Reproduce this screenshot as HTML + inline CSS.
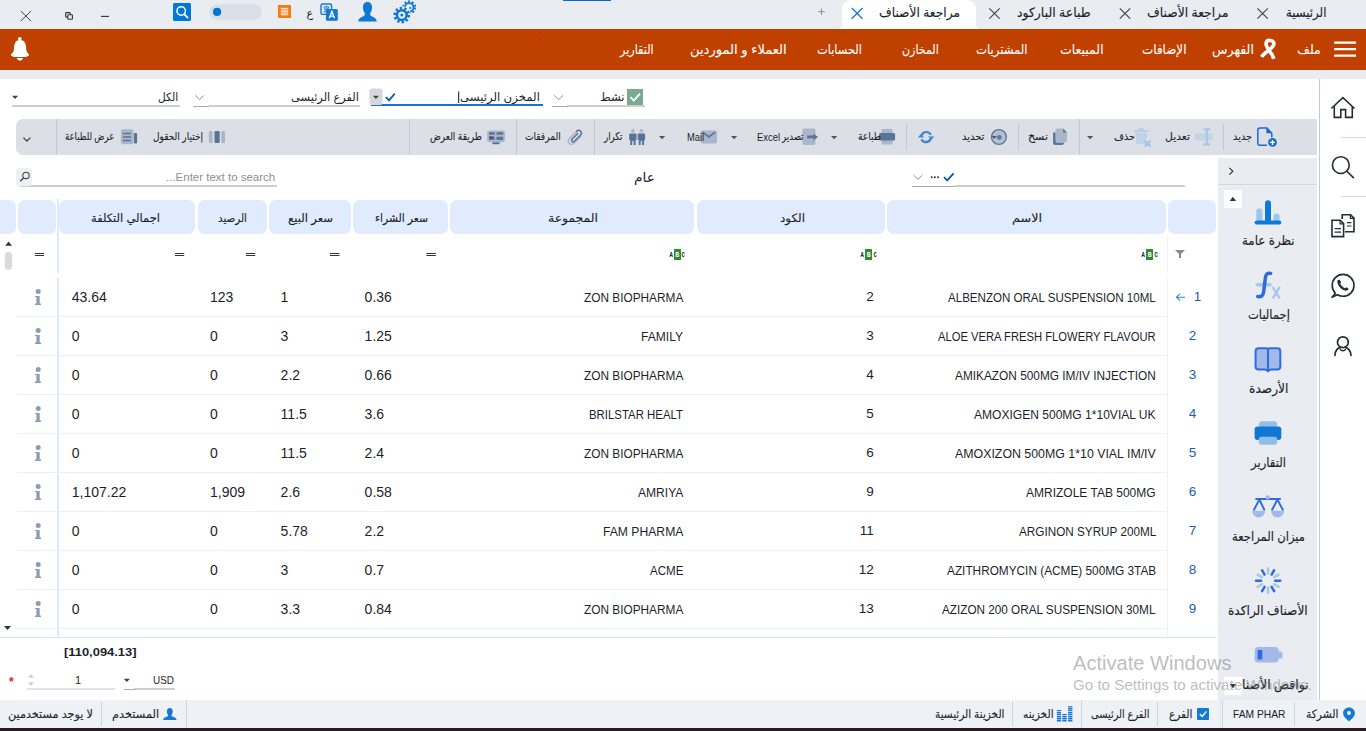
<!DOCTYPE html>
<html lang="ar">
<head>
<meta charset="utf-8">
<title>مراجعة الأصناف</title>
<style>
html,body{margin:0;padding:0}
body{width:1366px;height:731px;position:relative;overflow:hidden;background:#fff;font-family:"Liberation Sans","DejaVu Sans",sans-serif;color:#1b1f2a}
.a{position:absolute}
.t{position:absolute;white-space:nowrap;line-height:20px;transform-origin:left center;display:block}
svg{position:absolute;overflow:visible}
#titlebar{left:0;top:0;width:1366px;height:29px;background:#e9ecf1}
#acttab{left:842px;top:0;width:134px;height:29px;background:#fff;border-radius:9px 9px 0 0}
#menubar{left:0;top:28.500px;width:1366px;height:41.500px;background:#c04000}
#strip{left:0;top:70px;width:1366px;height:8.5px;background:#e9ecf1}
#rborder{left:1318.800px;top:79px;width:1.200px;height:621px;background:#c0c9d6}
#toolbar{left:16px;top:119px;width:1301px;height:36px;background:#dcdfe5;border-radius:7px 0 0 7px}
.tsep{position:absolute;width:1px;background:#c3c8d2;top:119px;height:36px}
.tsep.s{top:124px;height:26px}
#side{left:1218px;top:158px;width:99px;height:542px;background:#e9ecf1}
#sidesep{left:1218px;top:184px;width:99px;height:1px;background:#d3d8e0}
.hc{position:absolute;top:200px;height:33.5px;background:#e0ebfd;border-radius:6.500px}
#fixline{left:57px;top:199px;width:2px;height:438px;background:#dde9fc}
.rsep{position:absolute;left:17px;width:1150px;height:1px;background:#ecf0f8}
#statusbar{left:0;top:700px;width:1366px;height:27.5px;background:#eef1f6}
.ssep{position:absolute;top:701.500px;width:1px;height:24.300px;background:#cfd4dc}
#bottom{left:0;top:727.5px;width:1366px;height:3.5px;background:#2a1a22}
.ul{position:absolute;height:1px;background:#a9abb0}
.ul2{position:absolute;height:2px;background:#cdcdcf}
.isep{position:absolute;left:1341px;width:25px;height:1px;background:#d5dbe6}
.abc{height:11px;line-height:11px;font-size:6.5px;font-weight:bold;font-family:"Liberation Mono","DejaVu Sans Mono",monospace;color:#222;white-space:nowrap;direction:ltr;display:flex;align-items:center}
.abc .ab{display:inline-block;width:4.4px;text-align:center;position:relative;top:1.200px;transform:scaleX(0.850)}
.abc .bb{display:inline-block;width:7.200px;height:11px;line-height:13.400px;overflow:hidden;background:#2e8b2e;color:#fff;text-align:center;margin:0 0.400px;border-radius:0.500px}
</style>
</head>
<body>
<div class="a" id="titlebar"></div>
<div class="a" style="left:563px;top:0;width:48px;height:1.300px;background:#0a69d0"></div>
<div class="a" id="acttab"></div>
<svg class="a" style="left:830px;top:18px" width="160" height="11" viewBox="830 18 160 11"><path d="M836 29 C840.500 29,842 27,842 23 V29 Z M982 29 C977.500 29,976 27,976 23 V29 Z" fill="#fff"/></svg>
<div class="a" id="menubar"></div>
<div class="a" id="strip"></div>
<div class="a" id="rborder"></div>
<div class="a" id="toolbar"></div>
<div class="a" id="side"></div>
<div class="a" id="sidesep"></div>
<div class="a" id="statusbar"></div>
<div class="a" id="bottom"></div>
<!-- header cells -->
<div class="hc" style="left:-8px;width:24px"></div>
<div class="hc" style="left:18px;width:37.5px"></div>
<div class="hc" style="left:58.800px;width:136.700px"></div>
<div class="hc" style="left:198px;width:69px"></div>
<div class="hc" style="left:269.4px;width:81.2px"></div>
<div class="hc" style="left:353.4px;width:94.4px"></div>
<div class="hc" style="left:450px;width:243.5px"></div>
<div class="hc" style="left:696.5px;width:188.3px"></div>
<div class="hc" style="left:887px;width:279.2px"></div>
<div class="hc" style="left:1168.4px;width:47.6px"></div>
<div class="a" id="fixline"></div>
<div class="a" style="left:57px;top:272.5px;width:2px;height:5.5px;background:#fff"></div>
<!-- row separators -->
<div class="rsep" style="top:316px"></div>
<div class="rsep" style="top:355px"></div>
<div class="rsep" style="top:394px"></div>
<div class="rsep" style="top:433px"></div>
<div class="rsep" style="top:472px"></div>
<div class="rsep" style="top:511px"></div>
<div class="rsep" style="top:550px"></div>
<div class="rsep" style="top:589px"></div>
<div class="rsep" style="top:628px"></div>
<div class="a" style="left:1167px;top:237px;width:1px;height:34.500px;background:#ecf0f8"></div>
<div class="a" style="left:1167px;top:278px;width:1px;height:359px;background:#ecf0f8"></div>
<div class="a" style="left:0;top:636.5px;width:1217px;height:1px;background:#d6e4f7"></div>
<!-- status separators -->
<div class="ssep" style="left:1294px"></div>
<div class="ssep" style="left:1222.400px;top:700px;height:27.500px"></div>
<div class="ssep" style="left:1157.300px"></div>
<div class="ssep" style="left:1081.300px;top:700px;height:27.500px"></div>
<div class="ssep" style="left:1012.300px"></div>
<div class="ssep" style="left:186px;top:700px;height:27.500px"></div>
<div class="ssep" style="left:100.800px"></div>
<!-- toolbar separators -->
<div class="tsep s" style="left:1223px"></div>
<div class="tsep" style="left:1079px"></div>
<div class="tsep s" style="left:1018px"></div>
<div class="tsep s" style="left:906px"></div>
<div class="tsep" style="left:594px"></div>
<div class="tsep" style="left:515.5px"></div>
<div class="tsep" style="left:408.5px"></div>
<div class="tsep" style="left:55.5px"></div>
<!-- right icon separators -->
<div class="isep" style="top:137px"></div>
<div class="isep" style="top:196px"></div>
<!-- underlines -->
<div class="ul2" style="left:567px;top:105px;width:78px"></div><div class="ul" style="left:551.5px;top:106px;width:16px"></div>
<div class="a" style="left:371px;top:104px;width:172px;height:2px;background:#1a73d0"></div>
<div class="ul2" style="left:209px;top:105px;width:151px"></div><div class="ul" style="left:193px;top:106px;width:16px"></div>
<div class="ul2" style="left:12px;top:105px;width:168px"></div>
<div class="ul2" style="left:20px;top:185.300px;width:257px"></div>
<div class="ul2" style="left:955px;top:185.300px;width:230px"></div><div class="ul" style="left:912px;top:186.200px;width:43px"></div>
<div class="ul2" style="left:134px;top:688.300px;width:41px;height:1.600px"></div><div class="ul" style="left:123.700px;top:688.900px;width:11px"></div>
<div class="a" style="left:27px;top:688px;width:88px;height:1.500px;background:#dfe3ea"></div>
<!-- window controls + title icons + menu icons -->
<svg class="a" style="left:0;top:0" width="1366" height="80" viewBox="0 0 1366 80">
 <g stroke="#333" fill="none">
  <path d="M20.8 11 L31.1 21.1 M31.1 11 L20.8 21.1" stroke-width="0.9"/>
  <rect x="65.700" y="12.600" width="4.500" height="4.500" rx="0.700" stroke-width="1.1"/>
  <rect x="67.800" y="14.700" width="4.600" height="4.600" rx="0.700" stroke-width="1.1" fill="#e9ecf1"/>
  <path d="M101 16.4 H109" stroke-width="1.1"/>
 </g>
 <!-- tab close buttons -->
 <g stroke="#444" stroke-width="1.150" fill="none">
  <path d="M1257.4 8.3 L1267.8 18.7 M1267.8 8.3 L1257.4 18.7"/>
  <path d="M1119.8 8.3 L1130.2 18.7 M1130.2 8.3 L1119.8 18.7"/>
  <path d="M989.3 8.3 L999.7 18.7 M999.7 8.3 L989.3 18.7"/>
 </g>
 <path d="M851.7 8 L862.5 18.8 M862.5 8 L851.7 18.8" stroke="#1478d4" stroke-width="1.3" fill="none"/>
 <path d="M818.2 11.7 H824.8 M821.5 8.4 V15" stroke="#8a8f98" stroke-width="1" fill="none"/>
 <!-- search square -->
 <rect x="173" y="3" width="18" height="18" rx="1.5" fill="#0078d7"/>
 <circle cx="181.2" cy="11" r="4.2" fill="none" stroke="#fff" stroke-width="1.5"/>
 <path d="M184.4 14.3 L187.6 17.6" stroke="#fff" stroke-width="1.8" stroke-linecap="round"/>
 <!-- pill -->
 <rect x="209.2" y="4.2" width="52.6" height="15.6" rx="7.8" fill="#dadee6"/>
 <circle cx="217.1" cy="11.9" r="4.1" fill="#0078d0"/>
 <!-- orange -->
 <rect x="278" y="5" width="13" height="13" fill="#f57c0f"/>
 <path d="M280.8 8.4 H288.2 M280.8 10.1 H288.2 M280.8 11.7 H288.2 M280.8 13.2 H288.2 M280.8 14.8 H288.2" stroke="#fff" stroke-width="0.9"/>
 <!-- translate -->
 <rect x="321" y="4" width="10.6" height="10.4" rx="1.5" fill="#e9ecf1" stroke="#0f78d4" stroke-width="1.4"/>
 <path d="M323.3 7 H329.3 M326.3 5.6 V7 M324 9 H328.6 M328.4 7.2 C328 10,326 11.5,323.6 12.2 M324.6 8.8 C325.5 10.5,327 11.6,329 12.2" stroke="#0f78d4" stroke-width="1" fill="none"/>
 <rect x="325.9" y="8.9" width="11.9" height="11.9" rx="1.5" fill="#0f78d4"/>
 <path d="M329.3 18.3 L331.9 11.4 L334.5 18.3 M330.2 16.1 H333.6" stroke="#fff" stroke-width="1.3" fill="none"/>
 <!-- user -->
 <path d="M367.4 2 C370.4 2,372 4.2,372 7.4 C372 10,371 12,370.2 13.2 C370 14.6,370.4 15.6,371.6 16.2 C374.6 17.4,376.6 18.6,376.8 21.5 L358.2 21.5 C358.4 18.6,360.4 17.4,363.4 16.2 C364.6 15.6,365 14.6,364.8 13.2 C364 12,363 10,363 7.4 C363 4.2,364.4 2,367.4 2 Z" fill="#0f78d4"/>
 <!-- gears -->
 <g fill="none" stroke="#0f78d4">
  <circle cx="409.2" cy="7.4" r="5.6" stroke-width="2.6" stroke-dasharray="1.9 1.62"/>
  <circle cx="409.2" cy="7.4" r="4.2" stroke-width="1.8"/>
 </g>
 <circle cx="401.8" cy="15.1" r="9.2" fill="#e9ecf1"/>
 <g fill="none" stroke="#0f78d4">
  <circle cx="401.8" cy="15.1" r="7" stroke-width="2.8" stroke-dasharray="2.3 2.1"/>
  <circle cx="401.8" cy="15.1" r="4.9" stroke-width="2.6"/>
 </g>
 <circle cx="401.8" cy="15.1" r="1.5" fill="#0f78d4"/>
 <circle cx="410.2" cy="8" r="1.1" fill="#0f78d4"/>
 <!-- bell -->
 <circle cx="19.8" cy="38.8" r="1.8" fill="#fff"/>
 <path d="M19.9 40 C14.8 40,14 45,14 49 C14 52,12.2 53,10.8 54.4 C10.6 56.6,15 57.1,19.9 57.1 C25 57.1,29.3 56.6,29.1 54.4 C27.8 53,26.2 52,26.2 49 C26.2 45,25.4 40,19.9 40 Z" fill="#fff"/>
 <path d="M16.7 58.1 H23 C22.4 60,21 60.6,19.9 60.6 C18.7 60.6,17.3 60,16.7 58.1 Z" fill="#fff"/>
 <!-- hamburger -->
 <path d="M1334.1 42.6 H1356.1 M1334.1 49.1 H1356.1 M1334.1 55.6 H1356.1" stroke="#fff" stroke-width="2.1"/>
 <!-- ribbon -->
 <path d="M1263 58 C1264.500 53.500,1270.500 50,1272.600 45.500 C1274 41.500,1271.500 40.300,1269.100 40.300 C1266.700 40.300,1264.200 41.500,1265.600 45.500 C1267.700 50,1273.700 53.500,1275.200 58" fill="none" stroke="#fff" stroke-width="3.600" stroke-linejoin="round" transform="rotate(9 1269 49)"/>
 <circle cx="539.500" cy="39.600" r="1.400" fill="#f0141e"/>
</svg>
<span class="t" dir="rtl" style="left:306.500px;top:3px;font-size:11px;color:#222">ع</span>

<!-- filter row + toolbar + search row icons -->
<svg class="a" style="left:0;top:0" width="1366" height="290" viewBox="0 0 1366 290">
 <!-- green checkbox -->
 <rect x="627" y="89" width="16" height="16" fill="#7aa890"/>
 <path d="M630.4 97.2 L633.8 100.6 L640 93.6" stroke="#fff" stroke-width="1.8" fill="none"/>
 <!-- chevrons -->
 <g stroke="#8a8f98" stroke-width="1" fill="none">
  <path d="M554.2 95.4 L558.6 99.6 L563 95.4"/>
  <path d="M195.4 95.4 L199.6 99.6 L203.8 95.4"/>
  <path d="M913.6 175 L918 179.3 L922.4 175"/>
 </g>
 <!-- dropdown button -->
 <rect x="369.4" y="88.6" width="13" height="16.4" rx="2" fill="#d3d7de"/>
 <path d="M372.9 95.8 H378.9 L375.9 99 Z" fill="#444"/>
 <path d="M385.8 97.2 L389 100.4 L394.8 93.6" stroke="#0d56a8" stroke-width="1.7" fill="none"/>
 <path d="M458.7 91.5 V103" stroke="#111" stroke-width="1"/>
 <path d="M12 95.8 H18.2 L15.1 99 Z" fill="#444"/>
 <!-- search row -->
 <path d="M944 177.2 L947.2 180.4 L953.6 173.4" stroke="#0d56a8" stroke-width="1.8" fill="none"/>
 <g fill="#333"><rect x="930.8" y="176.4" width="1.7" height="1.7"/><rect x="934" y="176.4" width="1.7" height="1.7"/><rect x="937.2" y="176.4" width="1.7" height="1.7"/></g>
 <rect x="16.100" y="168" width="15.900" height="18" rx="3" fill="#eef0f3"/>
 <circle cx="26" cy="175.400" r="3.200" fill="none" stroke="#444" stroke-width="1.100"/>
 <path d="M23.700 177.800 L20.200 181.300" stroke="#444" stroke-width="1.300"/>
 <!-- toolbar: chevron -->
 <path d="M23.4 137.6 L26.9 141 L30.4 137.6" stroke="#444" stroke-width="1.3" fill="none"/>
 <!-- triangles -->
 <g fill="#555">
  <path d="M1087 136 H1093.2 L1090.1 139.3 Z"/>
  <path d="M831 136 H837.2 L834.1 139.3 Z"/>
  <path d="M731 136 H737.2 L734.1 139.3 Z"/>
  <path d="M659 136 H665.2 L662.1 139.3 Z"/>
 </g>
 <!-- new -->
 <path d="M1266.6 127.9 H1260 C1258.6 127.9,1257.8 128.8,1257.8 130.2 V143 C1257.8 144.4,1258.6 145.3,1260 145.3 H1267" stroke="#1a6bd8" stroke-width="1.5" fill="none"/>
 <path d="M1266.4 127.6 L1271.8 133.2 V137.6" stroke="#1a6bd8" stroke-width="1.5" fill="none"/>
 <path d="M1266.4 127.6 L1271.8 133.2 H1266.4 Z" fill="#1a6bd8"/>
 <circle cx="1272.5" cy="142.4" r="4.4" fill="#1a6bd8"/>
 <path d="M1270 142.4 H1275 M1272.5 139.9 V144.9" stroke="#fff" stroke-width="1.4"/>
 <!-- edit -->
 <rect x="1194.7" y="133" width="18" height="7.5" rx="2.5" fill="#c5d5e8"/>
 <path d="M1203.4 129.200 H1210.2 M1203.4 144.400 H1210.2 M1206.8 129.200 V144.400" stroke="#a3c6ec" stroke-width="2" fill="none"/>
 <!-- delete -->
 <path d="M1134 131 H1148.4 M1138.4 129.2 H1144" stroke="#b9cfe8" stroke-width="1.8"/>
 <path d="M1135.2 132.4 H1147.2 L1146 144.2 H1136.4 Z" fill="#c0d2e8"/>
 <path d="M1144.6 140.8 L1150.6 146.6 M1150.6 140.8 L1144.6 146.6" stroke="#a0c4ee" stroke-width="2.200"/>
 <!-- copy -->
 <path d="M1053 132.5 H1056 V142.5 H1064 V143 C1064 144.2,1063.2 145,1062 145 H1055 C1053.8 145,1053 144.2,1053 143 Z" fill="#5b78a0"/>
 <path d="M1057.4 128.5 H1063 L1067 132.6 V140.6 C1067 141.8,1066.2 142.6,1065 142.6 H1057.4 C1056.2 142.6,1055.4 141.8,1055.4 140.6 V130.5 C1055.4 129.3,1056.2 128.5,1057.4 128.5 Z" fill="#aab6c9"/>
 <path d="M1063 128.5 L1067 132.6 H1063 Z" fill="#5b78a0"/>
 <!-- select -->
 <circle cx="998.9" cy="137" r="7.4" fill="#b4bfd0" stroke="#5b78a0" stroke-width="1.4"/>
 <circle cx="999.3" cy="137.4" r="2.3" fill="#5b78a0"/>
 <path d="M991.6 136 H997 L994.3 138.8 Z" fill="#555"/>
 <!-- refresh -->
 <g fill="none" stroke="#3d85d0" stroke-width="2.2">
  <path d="M921.4 135.6 C922.4 132.8,924.4 132,926.2 132 C928.2 132,929.8 133,930.8 134.8"/>
  <path d="M930.8 138.6 C929.8 141.2,927.8 142.2,926 142.2 C924 142.2,922.4 141.2,921.4 139.4"/>
 </g>
 <path d="M928 136.4 H934.2 L931.6 139.8 Z M917.9 137.6 H924.2 L920.6 134.2 Z" fill="#3d85d0"/>
 <!-- print -->
 <rect x="881.6" y="129" width="11" height="5" rx="1.5" fill="#aab6c9"/>
 <rect x="881.6" y="138.4" width="11" height="6.2" rx="1.5" fill="#aab6c9"/>
 <rect x="879" y="133" width="16.1" height="7.5" rx="1.5" fill="#5a7399"/>
 <!-- export -->
 <rect x="802.4" y="128.5" width="13.1" height="16.4" rx="2" fill="#aab6c9"/>
 <path d="M807.2 135.6 H813.4 V133.4 L818 136.9 L813.4 140.4 V138.2 H807.2 Z" fill="#5a7399"/>
 <!-- mail -->
 <rect x="700.6" y="130.6" width="16.5" height="12.8" rx="2" fill="#aab6c9"/>
 <path d="M702.6 132.2 L708.85 137 L715.1 132.2" stroke="#5a7399" stroke-width="1.7" fill="none"/>
 <!-- people -->
 <circle cx="632.9" cy="130.8" r="1.9" fill="#aab6c9"/><circle cx="641.4" cy="130.8" r="1.9" fill="#aab6c9"/>
 <path d="M630 133.4 H635.8 C636.3 133.4,636.6 133.8,636.6 134.3 V140 H635.6 V145 H633.6 V141 H632.2 V145 H630.2 V140 H629.2 V134.3 C629.2 133.8,629.5 133.4,630 133.4 Z" fill="#5a7399"/>
 <path d="M638.5 133.4 H644.3 C644.8 133.4,645.1 133.8,645.1 134.3 V140 H644.1 V145 H642.1 V141 H640.7 V145 H638.7 V140 H637.7 V134.3 C637.700 133.8,638 133.4,638.5 133.4 Z" fill="#5a7399"/>
 <!-- clip -->
 <g fill="none" stroke-linecap="round">
  <path d="M580.6 136.6 L574.2 143 C572.6 144.6,570.4 144.4,569.2 143.200 C568 142,568 140,569.4 138.6 L576.6 131.4" stroke="#aab6c9" stroke-width="1.5"/>
  <path d="M576.6 131.400 C577.8 130.200,579.6 130.200,580.600 131.200 C581.600 132.200,581.600 134,580.400 135.200 L574.4 141.200 C573.600 142,572.600 142,572 141.400 C571.400 140.800,571.400 139.800,572.200 139 L577.600 133.600" stroke="#5a7399" stroke-width="1.5"/>
 </g>
 <!-- view mode -->
 <rect x="487.2" y="130.6" width="17.7" height="11.6" rx="2" fill="#aab6c9"/>
 <g fill="#5a7399"><rect x="489" y="132.200" width="5.700" height="2.500"/><rect x="496.500" y="132.200" width="6.600" height="2.500"/><rect x="489" y="136.800" width="5.700" height="3.100"/><rect x="496.500" y="136.800" width="6.600" height="3.100"/><rect x="492.200" y="142.200" width="7.500" height="2.100" rx="0.800"/></g>
 <path d="M488.800 136.400 H493.800 L491.300 139 Z" fill="#444"/>
 <!-- column chooser -->
 <rect x="208.9" y="131" width="3.700" height="12" rx="1.200" fill="#aab6c9"/>
 <rect x="214.5" y="131" width="5.200" height="12" rx="1.200" fill="#5a7399"/>
 <rect x="221.3" y="131" width="3.800" height="12" rx="1.200" fill="#aab6c9"/>
 <!-- print preview -->
 <rect x="120.9" y="129.3" width="12.500" height="15" rx="2" fill="#aab6c9"/>
 <path d="M123 133.400 H131.100 M123 137.100 H131.100 M123 140.600 H131.100" stroke="#5a7399" stroke-width="1.500"/>
 <rect x="133.9" y="133" width="3.200" height="10.600" rx="1" fill="#5a7399"/>
 <!-- funnel -->
 <path d="M1175 250 H1185 L1181 254 V258 H1179 V254 Z" fill="#8a8a8a"/>
 <!-- equals -->
 <g stroke="#333" stroke-width="1">
  <path d="M426.400 253.500 H435.800 M426.400 255.500 H435.800"/>
  <path d="M330 253.500 H339.500 M330 255.500 H339.500"/>
  <path d="M246 253.500 H255.200 M246 255.500 H255.200"/>
  <path d="M175 253.500 H184.200 M175 255.500 H184.200"/>
  <path d="M34.900 253.500 H44 M34.900 255.500 H44"/>
 </g>
 <!-- left scrollbar -->
 <path d="M5.200 245.800 H12 L8.600 241.400 Z" fill="#333"/>
 <rect x="4.800" y="252" width="7.200" height="17.800" rx="3.600" fill="#d9dadd"/>
</svg>
<svg class="a" style="left:0;top:600px" width="200" height="100" viewBox="0 600 200 100">
 <path d="M4 626 H11 L7.500 630 Z" fill="#333"/>
 <path d="M123.700 678.800 H130 L126.850 682 Z" fill="#444"/>
 <path d="M28 677.400 H34 L31 674.500 Z M28 682.600 H34 L31 685.500 Z" fill="#c8c9cc"/>
</svg>
<span class="t" style="left:9px;top:672px;font-size:12px;color:#e0201a;font-weight:bold">*</span>

<!-- right icon column -->
<svg class="a" style="left:1320px;top:80px" width="46" height="300" viewBox="1320 80 46 300">
 <g fill="none" stroke="#272b33" stroke-width="1.6">
  <path d="M1331.3 108.5 L1342.9 97.6 L1354.5 108.5"/>
  <path d="M1334.3 106 V117.4 H1340.8 V109.6 H1345.6 V117.4 H1352.3 V106"/>
  <circle cx="1340.8" cy="165.1" r="8.4"/>
  <path d="M1346.8 171.2 L1353.4 177.6" stroke-linecap="round"/>
  <!-- docs -->
  <path d="M1342.2 219 V214.8 H1350.6 L1354 218.2 V231.8 H1345"/>
  <path d="M1350.4 214.8 V218.4 H1354" stroke-width="1.2"/>
  <path d="M1347 222.6 H1351.4 M1347 226 H1351.4" stroke-width="1.2"/>
  <path d="M1332 220.3 H1340.2 L1343.6 223.700 V236.600 H1332 Z"/>
  <path d="M1340 220.300 V223.900 H1343.600" stroke-width="1.2"/>
  <path d="M1334.600 228.600 H1341 M1334.600 232.200 H1341" stroke-width="1.2"/>
  <!-- whatsapp -->
  <path d="M1335.400 293.200 C1333.400 291.200,1332.200 288.400,1332.200 285.400 C1332.200 279.300,1337 274.400,1343.100 274.400 C1349.200 274.400,1354 279.300,1354 285.400 C1354 291.500,1349.200 296.300,1343.100 296.300 C1341 296.300,1339 295.700,1337.400 294.700 L1332 297.300 Z" stroke-linejoin="round"/>
  <!-- user -->
  <circle cx="1342.9" cy="342.2" r="5.4" stroke-width="1.7"/>
  <path d="M1334.900 355.400 C1335.300 350.600,1338 347.600,1341 347.300 M1344.800 347.300 C1347.800 347.600,1350.700 350.600,1351 355.400" stroke-width="1.7" stroke-linecap="round"/>
  <path d="M1340 349.200 C1341.400 351.400,1344.400 351.400,1345.800 349.200" stroke-width="1.5"/>
 </g>
 <path d="M1338 280 C1337.200 280.600,1337 282,1338 284.400 C1339.400 287.400,1342.400 290,1345.200 290.600 C1346.800 290.900,1348.200 290.200,1348.600 288.800 L1346.400 287.200 L1345 288.200 C1343.400 287.800,1340.800 285.400,1340.200 283.600 L1341.200 282.400 L1339.800 279.800 Z" fill="#272b33"/>
</svg>
<!-- side panel -->
<div class="a" style="left:1224px;top:190px;width:18px;height:17.6px;background:#fff"></div>

<svg class="a" style="left:1218px;top:158px" width="100" height="542" viewBox="1218 158 100 542">
 <path d="M1229.400 167.800 L1232.800 171.200 L1229.400 174.600" stroke="#333" stroke-width="1.200" fill="none"/>
 <path d="M1229.700 201 H1236.100 L1232.900 196.800 Z" fill="#333"/>
 
 <!-- chart -->
 <rect x="1256.300" y="208.400" width="6.100" height="13" rx="2.500" fill="#9cc6ec"/>
 <rect x="1273.500" y="213.800" width="6.100" height="8" rx="2.500" fill="#9cc6ec"/>
 <rect x="1265" y="200.200" width="6" height="22" rx="3" fill="#0f78d4"/>
 <rect x="1254.600" y="220.400" width="26.700" height="4.100" rx="2" fill="#0f78d4"/>
 <!-- fx -->
 <path d="M1257.400 284.800 H1270" stroke="#a9c4ee" stroke-width="3.600" stroke-linecap="round"/>
 <path d="M1270.600 273.400 C1267.400 272.600,1265.800 274.400,1265.400 277.600 L1263.600 292 C1263.200 295.600,1261.400 297.200,1257.800 296.600" stroke="#2d6be0" stroke-width="3.500" stroke-linecap="round" fill="none"/>
 <path d="M1273.200 287.800 L1279.200 297.600 M1279.200 287.800 L1273.200 297.600" stroke="#a9c4ee" stroke-width="2.400" stroke-linecap="round"/>
 <!-- book -->
 <path d="M1258.600 348.200 H1266 C1267.200 348.200,1268 349,1268 350.200 C1268 349,1268.800 348.200,1270 348.200 H1277.400 C1279.200 348.200,1280.300 349.400,1280.300 351.200 V366.400 C1280.300 368.200,1279.200 369.400,1277.400 369.400 H1271 C1270 369.400,1269 370.200,1268 371.200 C1267 370.200,1266 369.400,1265 369.400 H1258.600 C1256.800 369.400,1255.600 368.200,1255.600 366.400 V351.200 C1255.600 349.400,1256.800 348.200,1258.600 348.200 Z" fill="#a3b9ea" stroke="#2d6be0" stroke-width="2" stroke-linejoin="round"/>
 <path d="M1268 349.600 V370" stroke="#2d6be0" stroke-width="2"/>
 <!-- printer -->
 <rect x="1259.200" y="421.200" width="17.900" height="8" rx="3" fill="#8fbfe8"/>
 <rect x="1254.600" y="426.600" width="26.700" height="13.400" rx="3" fill="#0f78d4"/>
 <rect x="1258.700" y="436.800" width="18.600" height="7.900" rx="3" fill="#8fbfe8"/>
 <!-- scales -->
 <path d="M1253.200 510.800 H1264.200 A5.500 6.400 0 0 1 1253.200 510.800 Z M1252.200 510.800 H1265.200 A6.500 6.800 0 0 1 1252.200 510.800 Z" fill="#a3b9ea"/>
 <path d="M1271.100 510.800 H1284.100 A6.500 6.800 0 0 1 1271.100 510.800 Z" fill="#a3b9ea"/>
 <path d="M1256.200 499 H1280" stroke="#2d6be0" stroke-width="2.200" stroke-linecap="round"/>
 <path d="M1253.600 510.400 L1259.400 499.600 L1264.600 510.400 M1271.800 510.400 L1277.400 499.600 L1283.200 510.400" stroke="#2d6be0" stroke-width="2" fill="none" stroke-linejoin="round"/>
 <circle cx="1267.700" cy="497.400" r="2.200" fill="#a3b9ea"/>
 <!-- spinner -->
 <g stroke-width="2.500" stroke-linecap="round">
  <g stroke="#2d6be0">
   <path d="M1268.100 573.600 V568.600" transform="rotate(30 1268.100 580.700)"/>
   <path d="M1268.100 573.600 V568.600" transform="rotate(90 1268.100 580.700)"/>
   <path d="M1268.100 573.600 V568.600" transform="rotate(150 1268.100 580.700)"/>
   <path d="M1268.100 573.600 V568.600" transform="rotate(210 1268.100 580.700)"/>
   <path d="M1268.100 573.600 V568.600" transform="rotate(270 1268.100 580.700)"/>
   <path d="M1268.100 573.600 V568.600" transform="rotate(330 1268.100 580.700)"/>
  </g>
  <g stroke="#a9c4ee">
   <path d="M1268.100 573.600 V568.600"/>
   <path d="M1268.100 573.600 V568.600" transform="rotate(60 1268.100 580.700)"/>
   <path d="M1268.100 573.600 V568.600" transform="rotate(120 1268.100 580.700)"/>
   <path d="M1268.100 573.600 V568.600" transform="rotate(180 1268.100 580.700)"/>
   <path d="M1268.100 573.600 V568.600" transform="rotate(240 1268.100 580.700)"/>
   <path d="M1268.100 573.600 V568.600" transform="rotate(300 1268.100 580.700)"/>
  </g>
 </g>
 <!-- battery -->
 <rect x="1254.700" y="647.100" width="23.900" height="15.400" rx="3.500" fill="#a3b9ea"/>
 <rect x="1277.600" y="651.500" width="4.800" height="7.100" rx="1.500" fill="#a3b9ea"/>
 <rect x="1257.600" y="650" width="4.700" height="9.600" rx="0.800" fill="#2d6be0"/>
</svg>
<!-- status bar icons -->
<svg class="a" style="left:0;top:700px" width="1366" height="28" viewBox="0 700 1366 28">
 <path d="M1349 707.400 C1352.400 707.400,1354.900 709.900,1354.900 713 C1354.900 716.600,1351.400 719.400,1349 721.400 C1346.600 719.400,1343.100 716.600,1343.100 713 C1343.100 709.900,1345.600 707.400,1349 707.400 Z" fill="#1478d4"/>
 <circle cx="1349" cy="713" r="1.900" fill="#fff"/>
 <rect x="1197" y="708" width="12" height="12" rx="1" fill="#1478d4"/>
 <path d="M1199.800 714 L1202.200 716.400 L1206.400 711.400" stroke="#fff" stroke-width="1.400" fill="none"/>
 <g stroke="#1478d4" stroke-width="4.300" stroke-dasharray="1.500 0.600">
  <path d="M1059 721.600 V710"/><path d="M1064.500 721.600 V714"/><path d="M1070.250 721.600 V706.300"/>
 </g>
 <path d="M169.800 708 C171.700 708,172.700 709.400,172.700 711.300 C172.700 713,172.100 714.200,171.600 714.900 C171.500 715.700,171.700 716.300,172.400 716.600 C174.300 717.300,176.400 718,176.600 720 L163 720 C163.200 718,165.300 717.300,167.200 716.600 C167.900 716.300,168.100 715.700,168 714.900 C167.500 714.200,166.900 713,166.900 711.300 C166.900 709.400,167.900 708,169.800 708 Z" fill="#1478d4"/>
</svg>
<div class="ssep" style="left:1219.500px;background:#dde1e8;top:700px;height:27.500px"></div>

<!-- info icons, arrow, abc -->
<svg class="a" style="left:0;top:278px" width="1366" height="360" viewBox="0 278 1366 360">
<defs><g id="inf"><circle cx="38.200" cy="291.400" r="2.500"/><path d="M35 295.900 H39.700 V303.500 H41.100 V304.900 H35 V303.500 H36.400 V297.100 H35 Z"/></g></defs>
<g fill="#8d9cb5">
<use href="#inf" y="0"/>
<use href="#inf" y="39"/>
<use href="#inf" y="78"/>
<use href="#inf" y="117"/>
<use href="#inf" y="156"/>
<use href="#inf" y="195"/>
<use href="#inf" y="234"/>
<use href="#inf" y="273"/>
<use href="#inf" y="312"/>
</g>
<path d="M1185 297.200 H1176.600 M1180 293.800 L1176.400 297.200 L1180 300.600" stroke="#2b8ae0" stroke-width="1.100" fill="none"/>
</svg>
<div class="a abc" style="left:1141.3px;top:249px"><span class="ab">A</span><span class="bb">B</span><span class="ab">C</span></div>
<div class="a abc" style="left:860.3px;top:249px"><span class="ab">A</span><span class="bb">B</span><span class="ab">C</span></div>
<div class="a abc" style="left:668.8px;top:249px"><span class="ab">A</span><span class="bb">B</span><span class="ab">C</span></div>

<!--SHAPES-->
<span class="t" id="t0" dir="rtl" style="left:1285.6px;top:3.0px;font-size:13px;color:#1b1f2a;font-weight:normal;transform:scaleX(0.9022);-webkit-text-stroke:0.12px #1b1f2a;">الرئيسية</span>
<span class="t" id="t1" dir="rtl" style="left:1147.0px;top:3.0px;font-size:13px;color:#1b1f2a;font-weight:normal;transform:scaleX(0.9470);-webkit-text-stroke:0.12px #1b1f2a;">مراجعة الأصناف</span>
<span class="t" id="t2" dir="rtl" style="left:1017.4px;top:3.0px;font-size:13px;color:#1b1f2a;font-weight:normal;transform:scaleX(0.9558);-webkit-text-stroke:0.12px #1b1f2a;">طباعة الباركود</span>
<span class="t" id="t3" dir="rtl" style="left:879.0px;top:3.0px;font-size:13px;color:#1b1f2a;font-weight:normal;transform:scaleX(0.9412);-webkit-text-stroke:0.12px #1b1f2a;">مراجعة الأصناف</span>
<span class="t" id="t4" dir="rtl" style="left:1297.4px;top:39.5px;font-size:13.5px;color:#ffffff;font-weight:normal;transform:scaleX(0.9265);-webkit-text-stroke:0.1px #fff;">ملف</span>
<span class="t" id="t5" dir="rtl" style="left:1212.0px;top:39.5px;font-size:13.5px;color:#ffffff;font-weight:normal;transform:scaleX(0.9363);-webkit-text-stroke:0.1px #fff;">الفهرس</span>
<span class="t" id="t6" dir="rtl" style="left:1141.5px;top:39.5px;font-size:13.5px;color:#ffffff;font-weight:normal;transform:scaleX(0.8845);-webkit-text-stroke:0.1px #fff;">الإضافات</span>
<span class="t" id="t7" dir="rtl" style="left:1060.0px;top:39.5px;font-size:13.5px;color:#ffffff;font-weight:normal;transform:scaleX(0.9246);-webkit-text-stroke:0.1px #fff;">المبيعات</span>
<span class="t" id="t8" dir="rtl" style="left:976.0px;top:39.5px;font-size:13.5px;color:#ffffff;font-weight:normal;transform:scaleX(0.8608);-webkit-text-stroke:0.1px #fff;">المشتريات</span>
<span class="t" id="t9" dir="rtl" style="left:901.6px;top:39.5px;font-size:13.5px;color:#ffffff;font-weight:normal;transform:scaleX(0.8167);-webkit-text-stroke:0.1px #fff;">المخازن</span>
<span class="t" id="t10" dir="rtl" style="left:816.7px;top:39.5px;font-size:13.5px;color:#ffffff;font-weight:normal;transform:scaleX(0.8420);-webkit-text-stroke:0.1px #fff;">الحسابات</span>
<span class="t" id="t11" dir="rtl" style="left:690.0px;top:39.5px;font-size:13.5px;color:#ffffff;font-weight:normal;transform:scaleX(0.9687);-webkit-text-stroke:0.1px #fff;">العملاء و الموردين</span>
<span class="t" id="t12" dir="rtl" style="left:620.0px;top:39.5px;font-size:13.5px;color:#ffffff;font-weight:normal;transform:scaleX(0.8299);-webkit-text-stroke:0.1px #fff;">التقارير</span>
<span class="t" id="t13" dir="rtl" style="left:599.6px;top:87.3px;font-size:11.5px;color:#1b1f2a;font-weight:normal;transform:scaleX(1.0086);">نشط</span>
<span class="t" id="t14" dir="rtl" style="left:459.5px;top:87.3px;font-size:11.5px;color:#1b1f2a;font-weight:normal;transform:scaleX(1.0201);">المخزن الرئيسى</span>
<span class="t" id="t15" dir="rtl" style="left:291.0px;top:87.3px;font-size:11.5px;color:#1b1f2a;font-weight:normal;transform:scaleX(0.9929);">الفرع الرئيسى</span>
<span class="t" id="t16" dir="rtl" style="left:158.0px;top:87.3px;font-size:11.5px;color:#1b1f2a;font-weight:normal;transform:scaleX(0.9281);">الكل</span>
<span class="t" id="t17" dir="rtl" style="left:1233.2px;top:126.4px;font-size:10.5px;color:#1b1f2a;font-weight:normal;transform:scaleX(0.9346);-webkit-text-stroke:0.1px #1b1f2a;">جديد</span>
<span class="t" id="t18" dir="rtl" style="left:1164.7px;top:126.4px;font-size:10.5px;color:#1b1f2a;font-weight:normal;transform:scaleX(1.0297);-webkit-text-stroke:0.1px #1b1f2a;">تعديل</span>
<span class="t" id="t19" dir="rtl" style="left:1114.2px;top:126.4px;font-size:10.5px;color:#1b1f2a;font-weight:normal;transform:scaleX(0.9174);-webkit-text-stroke:0.1px #1b1f2a;">حذف</span>
<span class="t" id="t20" dir="rtl" style="left:1028.0px;top:126.4px;font-size:10.5px;color:#1b1f2a;font-weight:normal;transform:scaleX(1.0483);-webkit-text-stroke:0.1px #1b1f2a;">نسخ</span>
<span class="t" id="t21" dir="rtl" style="left:962.3px;top:126.4px;font-size:10.5px;color:#1b1f2a;font-weight:normal;transform:scaleX(0.9469);-webkit-text-stroke:0.1px #1b1f2a;">تحديد</span>
<span class="t" id="t22" dir="rtl" style="left:858.0px;top:126.4px;font-size:10.5px;color:#1b1f2a;font-weight:normal;transform:scaleX(0.8638);-webkit-text-stroke:0.1px #1b1f2a;">طباعة</span>
<span class="t" id="t23" dir="rtl" style="left:782.0px;top:126.4px;font-size:10.5px;color:#1b1f2a;font-weight:normal;transform:scaleX(0.8186);-webkit-text-stroke:0.1px #1b1f2a;">تصدير</span>
<span class="t" id="t24" dir="ltr" style="left:757.2px;top:127.0px;font-size:10.5px;color:#1b1f2a;font-weight:normal;transform:scaleX(0.8954);">Excel</span>
<span class="t" id="t25" dir="ltr" style="left:686.5px;top:127.0px;font-size:10.5px;color:#1b1f2a;font-weight:normal;transform:scaleX(0.8928);">Mail</span>
<span class="t" id="t26" dir="rtl" style="left:604.3px;top:126.4px;font-size:10.5px;color:#1b1f2a;font-weight:normal;transform:scaleX(0.8217);-webkit-text-stroke:0.1px #1b1f2a;">تكرار</span>
<span class="t" id="t27" dir="rtl" style="left:525.3px;top:126.4px;font-size:10.5px;color:#1b1f2a;font-weight:normal;transform:scaleX(0.8622);-webkit-text-stroke:0.1px #1b1f2a;">المرفقات</span>
<span class="t" id="t28" dir="rtl" style="left:430.0px;top:126.4px;font-size:10.5px;color:#1b1f2a;font-weight:normal;transform:scaleX(0.8547);-webkit-text-stroke:0.1px #1b1f2a;">طريقة العرض</span>
<span class="t" id="t29" dir="rtl" style="left:152.8px;top:126.4px;font-size:10.5px;color:#1b1f2a;font-weight:normal;transform:scaleX(0.8591);-webkit-text-stroke:0.1px #1b1f2a;">إختيار الحقول</span>
<span class="t" id="t30" dir="rtl" style="left:65.3px;top:126.4px;font-size:10.5px;color:#1b1f2a;font-weight:normal;transform:scaleX(0.8051);-webkit-text-stroke:0.1px #1b1f2a;">عرض للطباعة</span>
<span class="t" id="t31" dir="rtl" style="left:166.3px;top:167.0px;font-size:11px;color:#8b9098;font-weight:normal;transform:scaleX(1.0444);">Enter text to search...</span>
<span class="t" id="t32" dir="rtl" style="left:634.0px;top:167.6px;font-size:13px;color:#1b1f2a;font-weight:normal;transform:scaleX(1.0616);">عام</span>
<span class="t" id="t33" dir="rtl" style="left:1012.0px;top:207.5px;font-size:11.5px;color:#1b1f2a;font-weight:normal;transform:scaleX(1.1092);-webkit-text-stroke:0.12px #1b1f2a;">الاسم</span>
<span class="t" id="t34" dir="rtl" style="left:780.0px;top:207.5px;font-size:11.5px;color:#1b1f2a;font-weight:normal;transform:scaleX(1.0363);-webkit-text-stroke:0.12px #1b1f2a;">الكود</span>
<span class="t" id="t35" dir="rtl" style="left:548.0px;top:207.5px;font-size:11.5px;color:#1b1f2a;font-weight:normal;transform:scaleX(1.0778);-webkit-text-stroke:0.12px #1b1f2a;">المجموعة</span>
<span class="t" id="t36" dir="rtl" style="left:375.0px;top:207.5px;font-size:11.5px;color:#1b1f2a;font-weight:normal;transform:scaleX(0.9357);-webkit-text-stroke:0.12px #1b1f2a;">سعر الشراء</span>
<span class="t" id="t37" dir="rtl" style="left:288.0px;top:207.5px;font-size:11.5px;color:#1b1f2a;font-weight:normal;transform:scaleX(1.0116);-webkit-text-stroke:0.12px #1b1f2a;">سعر البيع</span>
<span class="t" id="t38" dir="rtl" style="left:218.0px;top:207.5px;font-size:11.5px;color:#1b1f2a;font-weight:normal;transform:scaleX(0.8971);-webkit-text-stroke:0.12px #1b1f2a;">الرصيد</span>
<span class="t" id="t39" dir="rtl" style="left:91.0px;top:207.5px;font-size:11.5px;color:#1b1f2a;font-weight:normal;transform:scaleX(0.9991);-webkit-text-stroke:0.12px #1b1f2a;">اجمالي التكلفة</span>
<span class="t" id="t40" dir="ltr" style="left:948.1px;top:287.9px;font-size:12.5px;color:#1b1f2a;font-weight:normal;transform:scaleX(0.9247);">ALBENZON ORAL SUSPENSION 10ML</span>
<span class="t" id="t41" dir="ltr" style="left:584.1px;top:287.9px;font-size:12.5px;color:#1b1f2a;font-weight:normal;transform:scaleX(0.9468);">ZON BIOPHARMA</span>
<span class="t" id="t42" dir="ltr" style="left:938.2px;top:326.9px;font-size:12.5px;color:#1b1f2a;font-weight:normal;transform:scaleX(0.8976);">ALOE VERA FRESH FLOWERY FLAVOUR</span>
<span class="t" id="t43" dir="ltr" style="left:641.4px;top:326.9px;font-size:12.5px;color:#1b1f2a;font-weight:normal;transform:scaleX(0.9648);">FAMILY</span>
<span class="t" id="t44" dir="ltr" style="left:955.1px;top:365.9px;font-size:12.5px;color:#1b1f2a;font-weight:normal;transform:scaleX(0.9474);">AMIKAZON 500MG IM/IV INJECTION</span>
<span class="t" id="t45" dir="ltr" style="left:584.1px;top:365.9px;font-size:12.5px;color:#1b1f2a;font-weight:normal;transform:scaleX(0.9468);">ZON BIOPHARMA</span>
<span class="t" id="t46" dir="ltr" style="left:974.2px;top:404.9px;font-size:12.5px;color:#1b1f2a;font-weight:normal;transform:scaleX(0.9633);">AMOXIGEN 500MG 1*10VIAL UK</span>
<span class="t" id="t47" dir="ltr" style="left:589.4px;top:404.9px;font-size:12.5px;color:#1b1f2a;font-weight:normal;transform:scaleX(0.9122);">BRILSTAR HEALT</span>
<span class="t" id="t48" dir="ltr" style="left:955.0px;top:443.9px;font-size:12.5px;color:#1b1f2a;font-weight:normal;transform:scaleX(0.9888);">AMOXIZON 500MG 1*10 VIAL IM/IV</span>
<span class="t" id="t49" dir="ltr" style="left:584.1px;top:443.9px;font-size:12.5px;color:#1b1f2a;font-weight:normal;transform:scaleX(0.9468);">ZON BIOPHARMA</span>
<span class="t" id="t50" dir="ltr" style="left:1026.2px;top:482.9px;font-size:12.5px;color:#1b1f2a;font-weight:normal;transform:scaleX(0.9600);">AMRIZOLE TAB 500MG</span>
<span class="t" id="t51" dir="ltr" style="left:638.0px;top:482.9px;font-size:12.5px;color:#1b1f2a;font-weight:normal;transform:scaleX(0.9660);">AMRIYA</span>
<span class="t" id="t52" dir="ltr" style="left:1018.5px;top:521.9px;font-size:12.5px;color:#1b1f2a;font-weight:normal;transform:scaleX(0.9381);">ARGINON SYRUP 200ML</span>
<span class="t" id="t53" dir="ltr" style="left:603.0px;top:521.9px;font-size:12.5px;color:#1b1f2a;font-weight:normal;transform:scaleX(0.9727);">FAM PHARMA</span>
<span class="t" id="t54" dir="ltr" style="left:946.6px;top:560.9px;font-size:12.5px;color:#1b1f2a;font-weight:normal;transform:scaleX(0.9452);">AZITHROMYCIN (ACME) 500MG 3TAB</span>
<span class="t" id="t55" dir="ltr" style="left:650.0px;top:560.9px;font-size:12.5px;color:#1b1f2a;font-weight:normal;transform:scaleX(0.9246);">ACME</span>
<span class="t" id="t56" dir="ltr" style="left:942.4px;top:599.9px;font-size:12.5px;color:#1b1f2a;font-weight:normal;transform:scaleX(0.9385);">AZIZON 200 ORAL SUSPENSION 30ML</span>
<span class="t" id="t57" dir="ltr" style="left:584.1px;top:599.9px;font-size:12.5px;color:#1b1f2a;font-weight:normal;transform:scaleX(0.9468);">ZON BIOPHARMA</span>
<span class="t" id="t58" dir="rtl" style="left:1241.8px;top:231.0px;font-size:13px;color:#1b1f2a;font-weight:normal;transform:scaleX(0.9143);-webkit-text-stroke:0.12px #1b1f2a;">نظرة عامة</span>
<span class="t" id="t59" dir="rtl" style="left:1247.9px;top:304.6px;font-size:13px;color:#1b1f2a;font-weight:normal;transform:scaleX(0.8874);-webkit-text-stroke:0.12px #1b1f2a;">إجماليات</span>
<span class="t" id="t60" dir="rtl" style="left:1248.6px;top:378.6px;font-size:13px;color:#1b1f2a;font-weight:normal;transform:scaleX(0.9384);-webkit-text-stroke:0.12px #1b1f2a;">الأرصدة</span>
<span class="t" id="t61" dir="rtl" style="left:1251.0px;top:452.5px;font-size:13px;color:#1b1f2a;font-weight:normal;transform:scaleX(0.8949);-webkit-text-stroke:0.12px #1b1f2a;">التقارير</span>
<span class="t" id="t62" dir="rtl" style="left:1232.0px;top:527.0px;font-size:13px;color:#1b1f2a;font-weight:normal;transform:scaleX(0.8904);-webkit-text-stroke:0.12px #1b1f2a;">ميزان المراجعة</span>
<span class="t" id="t63" dir="rtl" style="left:1228.3px;top:601.0px;font-size:13px;color:#1b1f2a;font-weight:normal;transform:scaleX(0.9352);-webkit-text-stroke:0.12px #1b1f2a;">الأصناف الراكدة</span>
<span class="t" id="t64" dir="rtl" style="left:1229.0px;top:675.0px;font-size:13px;color:#1b1f2a;font-weight:normal;transform:scaleX(0.9588);-webkit-text-stroke:0.12px #1b1f2a;">نواقص الأصناف</span>
<span class="t" id="t65" dir="rtl" style="left:1305.5px;top:704.0px;font-size:11.5px;color:#1b1f2a;font-weight:normal;transform:scaleX(0.9298);-webkit-text-stroke:0.1px #1b1f2a;">الشركة</span>
<span class="t" id="t66" dir="ltr" style="left:1233.0px;top:704.0px;font-size:11.5px;color:#1b1f2a;font-weight:normal;transform:scaleX(0.8929);">FAM PHAR</span>
<span class="t" id="t67" dir="rtl" style="left:1169.0px;top:704.0px;font-size:11.5px;color:#1b1f2a;font-weight:normal;transform:scaleX(0.9132);-webkit-text-stroke:0.1px #1b1f2a;">الفرع</span>
<span class="t" id="t68" dir="rtl" style="left:1090.5px;top:704.0px;font-size:11.5px;color:#1b1f2a;font-weight:normal;transform:scaleX(0.8542);-webkit-text-stroke:0.1px #1b1f2a;">الفرع الرئيسى</span>
<span class="t" id="t69" dir="rtl" style="left:1023.0px;top:704.0px;font-size:11.5px;color:#1b1f2a;font-weight:normal;transform:scaleX(0.9186);-webkit-text-stroke:0.1px #1b1f2a;">الخزينه</span>
<span class="t" id="t70" dir="rtl" style="left:934.5px;top:704.0px;font-size:11.5px;color:#1b1f2a;font-weight:normal;transform:scaleX(0.9132);-webkit-text-stroke:0.1px #1b1f2a;">الخزينة الرئيسية</span>
<span class="t" id="t71" dir="rtl" style="left:111.9px;top:704.0px;font-size:11.5px;color:#1b1f2a;font-weight:normal;transform:scaleX(0.9880);-webkit-text-stroke:0.1px #1b1f2a;">المستخدم</span>
<span class="t" id="t72" dir="rtl" style="left:8.2px;top:704.0px;font-size:11.5px;color:#1b1f2a;font-weight:normal;transform:scaleX(0.9774);-webkit-text-stroke:0.1px #1b1f2a;">لا يوجد مستخدمين</span>
<span class="t" id="t73" dir="ltr" style="left:63.5px;top:642.0px;font-size:11.5px;color:#1b1f2a;font-weight:bold;transform:scaleX(1.1224);">[110,094.13]</span>
<span class="t" id="t74" dir="ltr" style="left:152.5px;top:670.0px;font-size:11px;color:#1b1f2a;font-weight:normal;transform:scaleX(0.9038);">USD</span>
<span class="t" id="t75" dir="ltr" style="left:1073.0px;top:652.5px;font-size:20px;color:rgba(125,125,125,.52);font-weight:normal;transform:scaleX(1.0042);z-index:6;">Activate Windows</span>
<span class="t" id="t76" dir="ltr" style="left:1073.0px;top:674.5px;font-size:15px;color:rgba(125,125,125,.52);font-weight:normal;transform:scaleX(1.0094);z-index:6;">Go to Settings to activate Windows.</span>
<span class="t" style="right:492.2px;top:287.3px;font-size:13.5px;color:#1b1f2a;font-weight:normal;">2</span>
<span class="t" style="left:364.6px;top:287.3px;font-size:14px;color:#1b1f2a;font-weight:normal;">0.36</span>
<span class="t" style="left:280.6px;top:287.3px;font-size:14px;color:#1b1f2a;font-weight:normal;">1</span>
<span class="t" style="left:210.0px;top:287.3px;font-size:14px;color:#1b1f2a;font-weight:normal;">123</span>
<span class="t" style="left:71.8px;top:287.3px;font-size:14px;color:#1b1f2a;font-weight:normal;">43.64</span>
<span class="t" style="left:1167.4px;width:60px;text-align:center;top:286.8px;font-size:13.5px;color:#1a5fb4;font-weight:normal;">1</span>
<span class="t" style="right:492.2px;top:326.3px;font-size:13.5px;color:#1b1f2a;font-weight:normal;">3</span>
<span class="t" style="left:364.6px;top:326.3px;font-size:14px;color:#1b1f2a;font-weight:normal;">1.25</span>
<span class="t" style="left:280.6px;top:326.3px;font-size:14px;color:#1b1f2a;font-weight:normal;">3</span>
<span class="t" style="left:210.0px;top:326.3px;font-size:14px;color:#1b1f2a;font-weight:normal;">0</span>
<span class="t" style="left:71.8px;top:326.3px;font-size:14px;color:#1b1f2a;font-weight:normal;">0</span>
<span class="t" style="left:1162.6px;width:60px;text-align:center;top:325.8px;font-size:13.5px;color:#1a5fb4;font-weight:normal;">2</span>
<span class="t" style="right:492.2px;top:365.3px;font-size:13.5px;color:#1b1f2a;font-weight:normal;">4</span>
<span class="t" style="left:364.6px;top:365.3px;font-size:14px;color:#1b1f2a;font-weight:normal;">0.66</span>
<span class="t" style="left:280.6px;top:365.3px;font-size:14px;color:#1b1f2a;font-weight:normal;">2.2</span>
<span class="t" style="left:210.0px;top:365.3px;font-size:14px;color:#1b1f2a;font-weight:normal;">0</span>
<span class="t" style="left:71.8px;top:365.3px;font-size:14px;color:#1b1f2a;font-weight:normal;">0</span>
<span class="t" style="left:1162.6px;width:60px;text-align:center;top:364.8px;font-size:13.5px;color:#1a5fb4;font-weight:normal;">3</span>
<span class="t" style="right:492.2px;top:404.3px;font-size:13.5px;color:#1b1f2a;font-weight:normal;">5</span>
<span class="t" style="left:364.6px;top:404.3px;font-size:14px;color:#1b1f2a;font-weight:normal;">3.6</span>
<span class="t" style="left:280.6px;top:404.3px;font-size:14px;color:#1b1f2a;font-weight:normal;">11.5</span>
<span class="t" style="left:210.0px;top:404.3px;font-size:14px;color:#1b1f2a;font-weight:normal;">0</span>
<span class="t" style="left:71.8px;top:404.3px;font-size:14px;color:#1b1f2a;font-weight:normal;">0</span>
<span class="t" style="left:1162.6px;width:60px;text-align:center;top:403.8px;font-size:13.5px;color:#1a5fb4;font-weight:normal;">4</span>
<span class="t" style="right:492.2px;top:443.3px;font-size:13.5px;color:#1b1f2a;font-weight:normal;">6</span>
<span class="t" style="left:364.6px;top:443.3px;font-size:14px;color:#1b1f2a;font-weight:normal;">2.4</span>
<span class="t" style="left:280.6px;top:443.3px;font-size:14px;color:#1b1f2a;font-weight:normal;">11.5</span>
<span class="t" style="left:210.0px;top:443.3px;font-size:14px;color:#1b1f2a;font-weight:normal;">0</span>
<span class="t" style="left:71.8px;top:443.3px;font-size:14px;color:#1b1f2a;font-weight:normal;">0</span>
<span class="t" style="left:1162.6px;width:60px;text-align:center;top:442.8px;font-size:13.5px;color:#1a5fb4;font-weight:normal;">5</span>
<span class="t" style="right:492.2px;top:482.3px;font-size:13.5px;color:#1b1f2a;font-weight:normal;">9</span>
<span class="t" style="left:364.6px;top:482.3px;font-size:14px;color:#1b1f2a;font-weight:normal;">0.58</span>
<span class="t" style="left:280.6px;top:482.3px;font-size:14px;color:#1b1f2a;font-weight:normal;">2.6</span>
<span class="t" style="left:210.0px;top:482.3px;font-size:14px;color:#1b1f2a;font-weight:normal;">1,909</span>
<span class="t" style="left:71.8px;top:482.3px;font-size:14px;color:#1b1f2a;font-weight:normal;">1,107.22</span>
<span class="t" style="left:1162.6px;width:60px;text-align:center;top:481.8px;font-size:13.5px;color:#1a5fb4;font-weight:normal;">6</span>
<span class="t" style="right:492.2px;top:521.3px;font-size:13.5px;color:#1b1f2a;font-weight:normal;">11</span>
<span class="t" style="left:364.6px;top:521.3px;font-size:14px;color:#1b1f2a;font-weight:normal;">2.2</span>
<span class="t" style="left:280.6px;top:521.3px;font-size:14px;color:#1b1f2a;font-weight:normal;">5.78</span>
<span class="t" style="left:210.0px;top:521.3px;font-size:14px;color:#1b1f2a;font-weight:normal;">0</span>
<span class="t" style="left:71.8px;top:521.3px;font-size:14px;color:#1b1f2a;font-weight:normal;">0</span>
<span class="t" style="left:1162.6px;width:60px;text-align:center;top:520.8px;font-size:13.5px;color:#1a5fb4;font-weight:normal;">7</span>
<span class="t" style="right:492.2px;top:560.3px;font-size:13.5px;color:#1b1f2a;font-weight:normal;">12</span>
<span class="t" style="left:364.6px;top:560.3px;font-size:14px;color:#1b1f2a;font-weight:normal;">0.7</span>
<span class="t" style="left:280.6px;top:560.3px;font-size:14px;color:#1b1f2a;font-weight:normal;">3</span>
<span class="t" style="left:210.0px;top:560.3px;font-size:14px;color:#1b1f2a;font-weight:normal;">0</span>
<span class="t" style="left:71.8px;top:560.3px;font-size:14px;color:#1b1f2a;font-weight:normal;">0</span>
<span class="t" style="left:1162.6px;width:60px;text-align:center;top:559.8px;font-size:13.5px;color:#1a5fb4;font-weight:normal;">8</span>
<span class="t" style="right:492.2px;top:599.3px;font-size:13.5px;color:#1b1f2a;font-weight:normal;">13</span>
<span class="t" style="left:364.6px;top:599.3px;font-size:14px;color:#1b1f2a;font-weight:normal;">0.84</span>
<span class="t" style="left:280.6px;top:599.3px;font-size:14px;color:#1b1f2a;font-weight:normal;">3.3</span>
<span class="t" style="left:210.0px;top:599.3px;font-size:14px;color:#1b1f2a;font-weight:normal;">0</span>
<span class="t" style="left:71.8px;top:599.3px;font-size:14px;color:#1b1f2a;font-weight:normal;">0</span>
<span class="t" style="left:1162.6px;width:60px;text-align:center;top:598.8px;font-size:13.5px;color:#1a5fb4;font-weight:normal;">9</span>
<span class="t" style="left:48.0px;width:60px;text-align:center;top:670.0px;font-size:11px;color:#1b1f2a;font-weight:normal;">1</span>
<div class="a" style="left:1224px;top:677px;width:18px;height:18px;background:#fff;z-index:5"></div>
<svg class="a" style="left:1224px;top:677px;z-index:5" width="18" height="18" viewBox="1224 677 18 18"><path d="M1229.700 684 H1236.100 L1232.900 688.200 Z" fill="#333"/></svg>
</body>
</html>
